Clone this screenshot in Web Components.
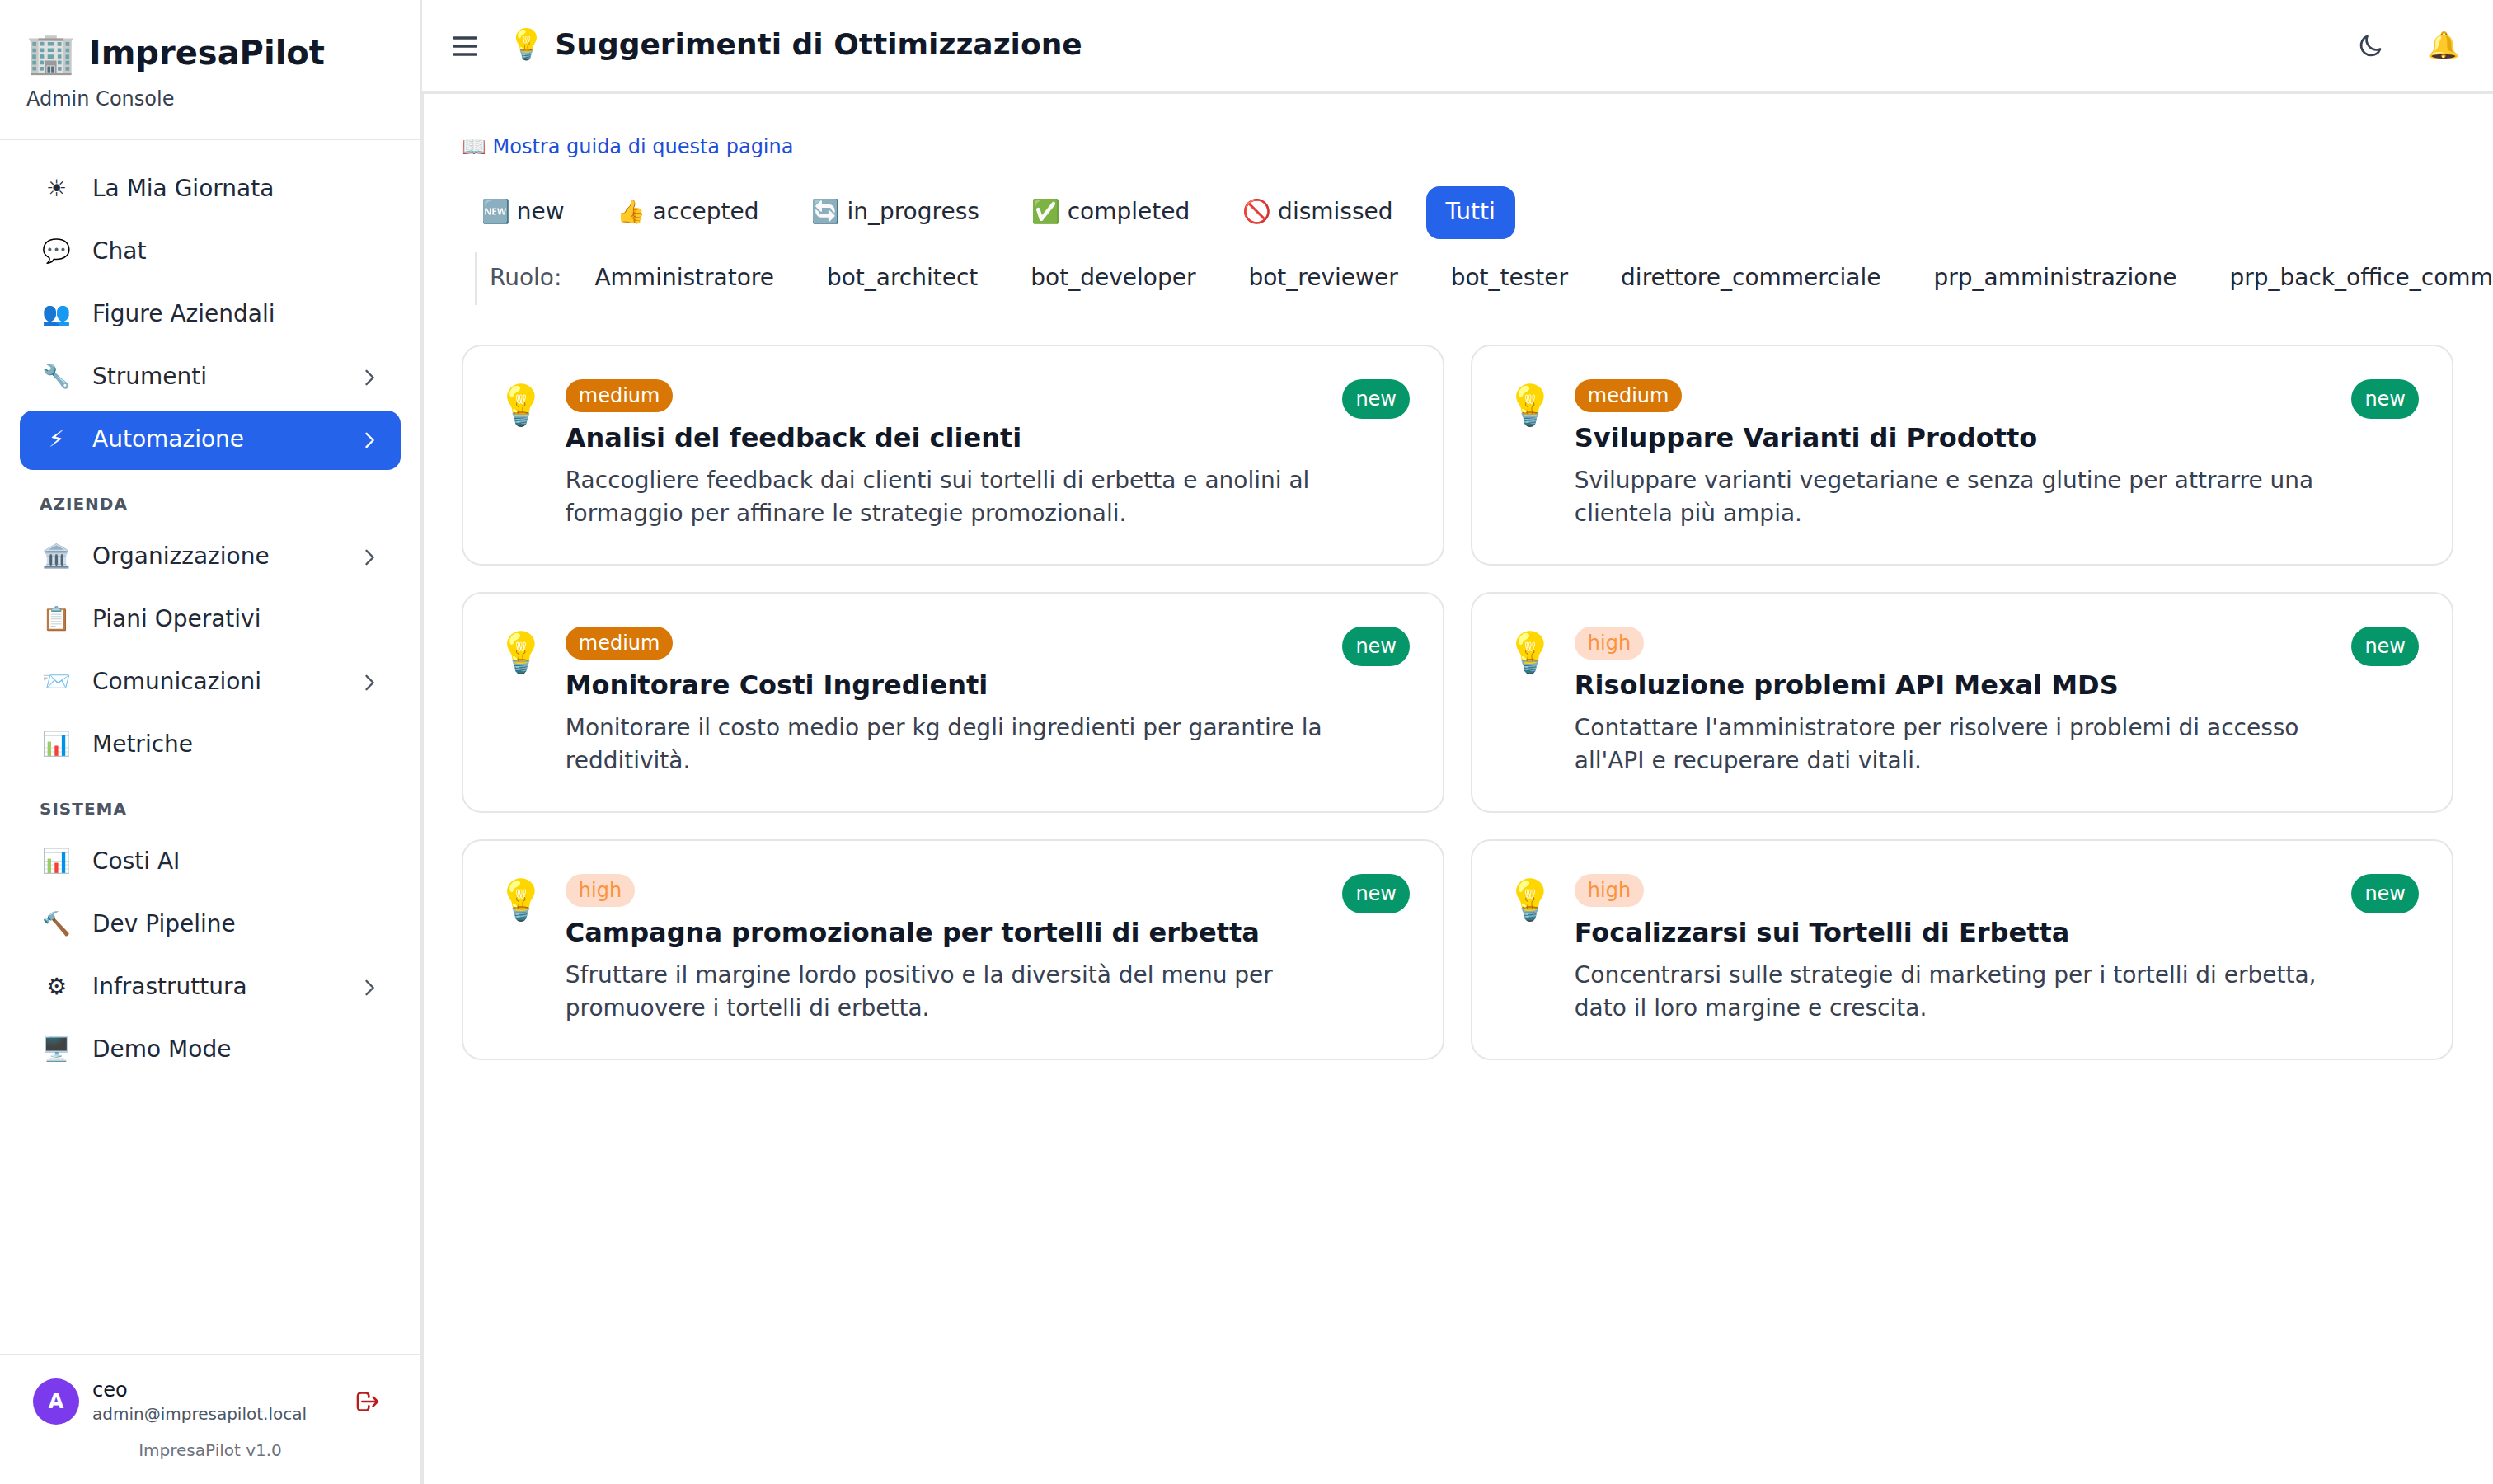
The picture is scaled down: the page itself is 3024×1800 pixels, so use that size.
<!DOCTYPE html>
<html lang="it">
<head>
<meta charset="utf-8">
<title>ImpresaPilot</title>
<style>
  html, body {
    margin: 0;
    height: 100%;
    overflow: hidden;
  }
  body {
    --line: #e5e6e8;
    --primary: #2563eb;
    --text: #1f2937;
    --strong: #111827;
    --muted: #374151;
    font-family: "DejaVu Sans", "Noto Color Emoji", sans-serif;
    font-size: 28px;
    line-height: 40px;
    color: var(--text);
    background: #fff;
  }
</style>
</head>
<body>
<app-shell>
  <side-bar slot="sidebar">
    <nav-item icon="☀">La Mia Giornata</nav-item>
    <nav-item icon="💬">Chat</nav-item>
    <nav-item icon="👥">Figure Aziendali</nav-item>
    <nav-item icon="🔧" expandable>Strumenti</nav-item>
    <nav-item icon="⚡&#xFE0E;" expandable active>Automazione</nav-item>
    <nav-heading>AZIENDA</nav-heading>
    <nav-item icon="🏛️" expandable>Organizzazione</nav-item>
    <nav-item icon="📋">Piani Operativi</nav-item>
    <nav-item icon="📨" expandable>Comunicazioni</nav-item>
    <nav-item icon="📊">Metriche</nav-item>
    <nav-heading>SISTEMA</nav-heading>
    <nav-item icon="📊">Costi AI</nav-item>
    <nav-item icon="🔨">Dev Pipeline</nav-item>
    <nav-item icon="⚙" expandable>Infrastruttura</nav-item>
    <nav-item icon="🖥️">Demo Mode</nav-item>
    <user-box slot="footer" initial="A" name="ceo" email="admin@impresapilot.local"></user-box>
  </side-bar>
  <top-bar slot="header">💡 Suggerimenti di Ottimizzazione</top-bar>

  <guide-link>📖 Mostra guida di questa pagina</guide-link>
  <filter-row>
    <filter-button>🆕 new</filter-button>
    <filter-button>👍 accepted</filter-button>
    <filter-button>🔄 in_progress</filter-button>
    <filter-button>✅ completed</filter-button>
    <filter-button>🚫 dismissed</filter-button>
    <filter-button active>Tutti</filter-button>
  </filter-row>
  <filter-row label="Ruolo:">
    <filter-button>Amministratore</filter-button>
    <filter-button>bot_architect</filter-button>
    <filter-button>bot_developer</filter-button>
    <filter-button>bot_reviewer</filter-button>
    <filter-button>bot_tester</filter-button>
    <filter-button>direttore_commerciale</filter-button>
    <filter-button>prp_amministrazione</filter-button>
    <filter-button>prp_back_office_commerciale</filter-button>
  </filter-row>
  <card-grid>
    <suggestion-card priority="medium" status="new">
      <span slot="title">Analisi del feedback dei clienti</span>
      Raccogliere feedback dai clienti sui tortelli di erbetta e anolini al formaggio per affinare le strategie promozionali.
    </suggestion-card>
    <suggestion-card priority="medium" status="new">
      <span slot="title">Sviluppare Varianti di Prodotto</span>
      Sviluppare varianti vegetariane e senza glutine per attrarre una clientela più ampia.
    </suggestion-card>
    <suggestion-card priority="medium" status="new">
      <span slot="title">Monitorare Costi Ingredienti</span>
      Monitorare il costo medio per kg degli ingredienti per garantire la redditività.
    </suggestion-card>
    <suggestion-card priority="high" status="new">
      <span slot="title">Risoluzione problemi API Mexal MDS</span>
      Contattare l'amministratore per risolvere i problemi di accesso all'API e recuperare dati vitali.
    </suggestion-card>
    <suggestion-card priority="high" status="new">
      <span slot="title">Campagna promozionale per tortelli di erbetta</span>
      Sfruttare il margine lordo positivo e la diversità del menu per promuovere i tortelli di erbetta.
    </suggestion-card>
    <suggestion-card priority="high" status="new">
      <span slot="title">Focalizzarsi sui Tortelli di Erbetta</span>
      Concentrarsi sulle strategie di marketing per i tortelli di erbetta, dato il loro margine e crescita.
    </suggestion-card>
  </card-grid>
</app-shell>

<script>
// Small base class: renders template() into an open shadow root
class BaseElement extends HTMLElement {
  constructor() {
    super();
    this.attachShadow({ mode: "open" });
  }

  connectedCallback() {
    this.shadowRoot.innerHTML = this.template();
  }
}

class AppShell extends BaseElement {
  template() {
    return `
    <style>
      :host { display: flex; height: 100vh; }
      .column { flex: 1; min-width: 0; display: flex; flex-direction: column; }
      main {
        flex: 1;
        border-left: 2px solid var(--line);
        padding: 44px 48px 48px 46px;
        overflow: hidden;
      }
    </style>
    <slot name="sidebar"></slot>
    <div class="column">
      <slot name="header"></slot>
      <main><slot></slot></main>
    </div>`;
  }
}

class SideBar extends BaseElement {
  template() {
    return `
    <style>
      :host {
        box-sizing: border-box;
        width: 512px;
        flex: none;
        display: flex;
        flex-direction: column;
        border-right: 2px solid var(--line);
      }
      header {
        box-sizing: border-box;
        height: 170px;
        padding: 32px 32px 0;
        border-bottom: 2px solid var(--line);
      }
      .brand { display: flex; align-items: center; gap: 16px; height: 64px; }
      .logo { font-size: 48px; line-height: 64px; }
      .name { font-size: 40px; line-height: 56px; font-weight: 700; color: var(--strong); }
      .sub { margin-top: 8px; font-size: 24px; line-height: 32px; color: var(--muted); }
      nav { flex: 1; display: flex; flex-direction: column; gap: 4px; padding: 24px; }
    </style>
    <header>
      <div class="brand"><span class="logo">🏢</span><span class="name">ImpresaPilot</span></div>
      <div class="sub">Admin Console</div>
    </header>
    <nav><slot></slot></nav>
    <slot name="footer"></slot>`;
  }
}

class NavItem extends BaseElement {
  template() {
    const chevron = `
      <svg viewBox="0 0 24 24" width="28" height="28" fill="none" stroke="currentColor"
        stroke-width="2" stroke-linecap="round" stroke-linejoin="round"><path d="M9 5l7 7-7 7"/></svg>`;
    return `
    <style>
      :host {
        box-sizing: border-box;
        display: flex;
        align-items: center;
        gap: 24px;
        height: 72px;
        padding: 0 24px;
        border-radius: 16px;
      }
      :host([active]) { background: var(--primary); color: #fff; }
      .icon { box-sizing: border-box; width: 40px; padding-left: 1px; display: flex; justify-content: center; white-space: nowrap; }
      .label { flex: 1; }
      .icon, .label { padding-bottom: 2px; }
      svg { color: #4b5563; }
      :host([active]) svg { color: #fff; }
    </style>
    <span class="icon">${this.getAttribute("icon")}</span>
    <span class="label"><slot></slot></span>
    ${this.hasAttribute("expandable") ? chevron : ""}`;
  }
}

class NavHeading extends BaseElement {
  template() {
    return `
    <style>
      :host {
        box-sizing: border-box;
        display: block;
        height: 62px;
        padding: 22px 24px 0;
        font-size: 20px;
        line-height: 30px;
        font-weight: 700;
        letter-spacing: 0.05em;
        color: #4b5563;
      }
    </style>
    <slot></slot>`;
  }
}

class UserBox extends BaseElement {
  template() {
    return `
    <style>
      :host {
        box-sizing: border-box;
        display: block;
        height: 158px;
        padding: 24px 24px 0;
        border-top: 2px solid var(--line);
      }
      .row { display: flex; align-items: center; gap: 16px; padding: 0 24px 0 16px; height: 64px; }
      .avatar {
        width: 56px;
        height: 56px;
        border-radius: 50%;
        background: #7c3aed;
        color: #fff;
        font-size: 24px;
        line-height: 56px;
        font-weight: 700;
        text-align: center;
      }
      .who { flex: 1; padding-bottom: 3px; }
      .name { font-size: 24px; line-height: 32px; color: var(--strong); }
      .email { font-size: 20px; line-height: 26px; color: #4b5563; }
      .version { margin-top: 13px; font-size: 20px; line-height: 28px; text-align: center; color: #6b7280; }
      svg { color: #b91c1c; }
    </style>
    <div class="row">
      <div class="avatar">${this.getAttribute("initial")}</div>
      <div class="who">
        <div class="name">${this.getAttribute("name")}</div>
        <div class="email">${this.getAttribute("email")}</div>
      </div>
      <svg viewBox="0 0 24 24" width="32" height="32" fill="none" stroke="currentColor" stroke-width="2"
        stroke-linecap="round" stroke-linejoin="round"><path d="M17 16l4-4m0 0l-4-4m4 4H7m6 4v1a3 3 0 01-3 3H6a3 3 0 01-3-3V7a3 3 0 013-3h4a3 3 0 013 3v1"/></svg>
    </div>
    <div class="version">ImpresaPilot v1.0</div>`;
  }
}

class TopBar extends BaseElement {
  template() {
    return `
    <style>
      :host {
        box-sizing: border-box;
        flex: none;
        display: flex;
        align-items: center;
        height: 114px;
        padding: 0 40px 0 32px;
        border-bottom: 4px solid var(--line);
      }
      h1 { flex: 1; margin: 0 0 2px 32px; font-size: 36px; line-height: 56px; color: var(--strong); }
      svg { color: var(--muted); }
      .menu { margin-top: 2px; }
      .bell { margin-left: 52px; font-size: 32px; }
    </style>
    <svg class="menu" viewBox="0 0 24 24" width="40" height="40" fill="none" stroke="currentColor" stroke-width="2"
      stroke-linecap="round"><path d="M4 6h16M4 12h16M4 18h16"/></svg>
    <h1><slot></slot></h1>
    <svg viewBox="0 0 24 24" width="32" height="32" fill="none" stroke="currentColor" stroke-width="2"
      stroke-linecap="round" stroke-linejoin="round"><path d="M20.354 15.354A9 9 0 018.646 3.646 9.003 9.003 0 0012 21a9.003 9.003 0 008.354-5.646z"/></svg>
    <span class="bell">🔔</span>`;
  }
}

class GuideLink extends BaseElement {
  template() {
    return `
    <style>
      :host { display: block; height: 68px; font-size: 24px; line-height: 40px; color: #1d4ed8; }
    </style>
    <slot></slot>`;
  }
}

class FilterRow extends BaseElement {
  template() {
    const label = this.getAttribute("label");
    return `
    <style>
      :host { display: flex; gap: 16px; height: 64px; margin-bottom: 16px; white-space: nowrap; word-spacing: -0.9px; }
      :host([label]) { margin: 0 0 48px 16px; border-left: 2px solid var(--line); padding-left: 16px; }
      .label { line-height: 62px; color: #4b5563; }
    </style>
    ${label ? `<span class="label">${label}</span>` : ""}
    <slot></slot>`;
  }
}

class FilterButton extends BaseElement {
  template() {
    return `
    <style>
      :host { flex: none; display: block; padding: 0 24px; line-height: 62px; border-radius: 16px; }
      :host([active]) { background: var(--primary); color: #fff; }
    </style>
    <slot></slot>`;
  }
}

class CardGrid extends BaseElement {
  template() {
    return `
    <style>
      :host { display: grid; grid-template-columns: 1fr 1fr; gap: 32px; }
    </style>
    <slot></slot>`;
  }
}

class SuggestionCard extends BaseElement {
  template() {
    return `
    <style>
      :host {
        box-sizing: border-box;
        display: flex;
        align-items: flex-start;
        gap: 24px;
        height: 268px;
        padding: 40px;
        border: 2px solid var(--line);
        border-radius: 24px;
      }
      .icon { font-size: 48px; line-height: 62px; }
      .body { flex: 1; }
      .priority {
        display: block;
        width: fit-content;
        padding: 0 16px;
        border-radius: 20px;
        font-size: 24px;
        line-height: 40px;
        color: #fff;
        background: #d97706;
      }
      .priority.high { background: #fddccc; color: #fb923c; }
      h3 { margin: 9px 0 10px; font-size: 32px; line-height: 44px; color: var(--strong); }
      p { margin: 0; color: var(--muted); }
      .status {
        padding: 0 16px;
        border-radius: 24px;
        font-size: 24px;
        line-height: 48px;
        color: #fff;
        background: #059669;
      }
    </style>
    <span class="icon">💡</span>
    <div class="body">
      <span class="priority ${this.getAttribute("priority")}">${this.getAttribute("priority")}</span>
      <h3><slot name="title"></slot></h3>
      <p><slot></slot></p>
    </div>
    <span class="status">${this.getAttribute("status")}</span>`;
  }
}

customElements.define("app-shell", AppShell);
customElements.define("side-bar", SideBar);
customElements.define("nav-item", NavItem);
customElements.define("nav-heading", NavHeading);
customElements.define("user-box", UserBox);
customElements.define("top-bar", TopBar);
customElements.define("guide-link", GuideLink);
customElements.define("filter-row", FilterRow);
customElements.define("filter-button", FilterButton);
customElements.define("card-grid", CardGrid);
customElements.define("suggestion-card", SuggestionCard);
</script>
</body>
</html>
